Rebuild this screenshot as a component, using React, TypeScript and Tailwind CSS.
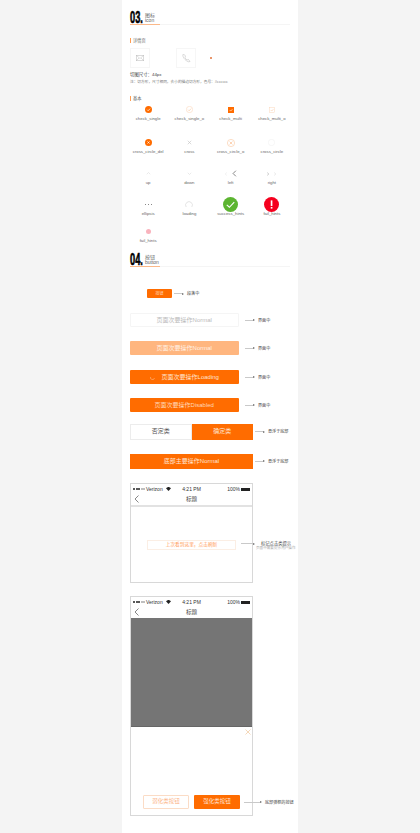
import React from "react";

const O = "#ff6c00";

function Svg({ s, children }: { s: number; children: React.ReactNode }) {
  return (
    <svg width={s} height={s} viewBox="0 0 20 20" fill="none" className="block">
      {children}
    </svg>
  );
}
const Tick = ({ c = "#fff", w = 2 }: { c?: string; w?: number }) => (
  <path d="M6 10.5l3 3 5.5-6" stroke={c} strokeWidth={w} fill="none" />
);
const X = ({ c = "#fff", w = 2 }: { c?: string; w?: number }) => (
  <path d="M7 7l6 6M13 7l-6 6" stroke={c} strokeWidth={w} fill="none" />
);

const cells: { label: string; h: string; icon: React.ReactNode }[] = [
  { label: "check_single", h: "h-[33px]", icon: <Svg s={7}><circle cx="10" cy="10" r="10" fill={O} /><Tick /></Svg> },
  { label: "check_single_o", h: "h-[33px]", icon: <Svg s={7}><circle cx="10" cy="10" r="9" stroke="#fbd2b4" strokeWidth="1.5" /><Tick c="#fbc9a4" /></Svg> },
  { label: "check_multi", h: "h-[33px]", icon: <Svg s={6}><rect width="20" height="20" fill={O} /><Tick /></Svg> },
  { label: "check_multi_o", h: "h-[33px]", icon: <Svg s={6}><rect x="1" y="1" width="18" height="18" stroke="#fbd2b4" strokeWidth="1.5" /><Tick c="#fbc9a4" /></Svg> },
  { label: "cross_circle_del", h: "h-[31px]", icon: <Svg s={7}><circle cx="10" cy="10" r="10" fill={O} /><X /></Svg> },
  { label: "cross", h: "h-[31px]", icon: <Svg s={5}><path d="M3 3l14 14M17 3L3 17" stroke="#c4c4c4" strokeWidth="2.5" /></Svg> },
  { label: "cross_circle_o", h: "h-[31px]", icon: <Svg s={8}><circle cx="10" cy="10" r="9" stroke="#fbc9a4" strokeWidth="1.6" /><path d="M6.5 6.5l7 7M13.5 6.5l-7 7" stroke="#fbb98a" strokeWidth="1.6" /></Svg> },
  { label: "cross_circle", h: "h-[31px]", icon: <Svg s={7}><circle cx="10" cy="10" r="9" stroke="#ececec" strokeWidth="1.4" /></Svg> },
  { label: "up", h: "h-[31px]", icon: <Svg s={5}><path d="M3 13l7-7 7 7" stroke="#d4d4d4" strokeWidth="2" /></Svg> },
  { label: "down", h: "h-[31px]", icon: <Svg s={5}><path d="M3 7l7 7 7-7" stroke="#d4d4d4" strokeWidth="2" /></Svg> },
  {
    label: "left",
    h: "h-[31px]",
    icon: (
      <div className="flex items-center gap-[3px]">
        <Svg s={4}><path d="M14 3l-8 7 8 7" stroke="#dcdcdc" strokeWidth="2" /></Svg>
        <Svg s={7}><path d="M14 2l-8 8 8 8" stroke="#555" strokeWidth="2" /></Svg>
      </div>
    ),
  },
  {
    label: "right",
    h: "h-[31px]",
    icon: (
      <div className="flex items-center gap-[3px]">
        <Svg s={4}><path d="M6 3l8 7-8 7" stroke="#999" strokeWidth="2.5" /></Svg>
        <Svg s={4}><path d="M6 3l8 7-8 7" stroke="#c8c8c8" strokeWidth="2" /></Svg>
      </div>
    ),
  },
  {
    label: "ellipsis",
    h: "h-[27px]",
    icon: (
      <div className="flex gap-[2px]">
        <span className="w-[1px] h-[1px] bg-[#888]" />
        <span className="w-[1px] h-[1px] bg-[#888]" />
        <span className="w-[1px] h-[1px] bg-[#888]" />
      </div>
    ),
  },
  { label: "loading", h: "h-[27px]", icon: <Svg s={8}><path d="M3 15A8.5 8.5 0 1 1 17 15" stroke="#d0d0d0" strokeWidth="1.4" /></Svg> },
  {
    label: "success_hints",
    h: "h-[27px]",
    icon: (
      <Svg s={15}>
        <circle cx="10" cy="10" r="10" fill="#5cb531" />
        <path d="M5 10.5l3.5 3.2L15 6.8" stroke="#fff" strokeWidth="1.5" />
      </Svg>
    ),
  },
  {
    label: "fail_hints",
    h: "h-[27px]",
    icon: (
      <Svg s={15}>
        <circle cx="10" cy="10" r="10" fill="#f5001e" />
        <rect x="9" y="4.5" width="2.2" height="7.5" fill="#fff" />
        <rect x="9" y="13.3" width="2.2" height="2.2" fill="#fff" />
      </Svg>
    ),
  },
  { label: "fail_hints", h: "h-[27px]", icon: <Svg s={5}><circle cx="10" cy="10" r="10" fill="#f9b3bd" /></Svg> },
];

function Title({ num, zh, en }: { num: string; zh: string; en: string }) {
  return (
    <div className="relative flex items-end h-[14px] border-b border-[#f5f5f5]">
      <span className="inline-block w-[15px] shrink-0 origin-left scale-x-[0.56] text-[16.5px] leading-[13px] font-bold text-black [-webkit-text-stroke:0.6px_#000]">
        {num}
      </span>
      <div className="mb-[1px] flex flex-col text-[5px] leading-[5px] text-[#666]">
        <span>{zh}</span>
        <span>{en}</span>
      </div>
      <div className="absolute left-0 bottom-[-1px] w-[30px] h-[1px] bg-[#fbb98a]" />
    </div>
  );
}

function Sub({ children }: { children: React.ReactNode }) {
  return (
    <div className="flex items-center h-[5px] gap-[2px] text-[4.2px] leading-[5px] text-[#666]">
      <span className="w-[1px] h-[5px] bg-[#ff9d52]" />
      {children}
    </div>
  );
}

function Arrow({ w, text, gap = 3 }: { w: number; text: string; gap?: number }) {
  return (
    <div className="flex items-center">
      <div className="flex items-center" style={{ width: w }}>
        <span className="flex-1 h-[1px] bg-[#c9c9c9]" />
        <span className="w-0 h-0 border-y-[1px] border-y-transparent border-l-[2px] border-l-[#666]" />
      </div>
      <span className="text-[4.1px] leading-[5px] whitespace-nowrap text-[#444]" style={{ marginLeft: gap }}>
        {text}
      </span>
    </div>
  );
}

function Btn({ cls, children }: { cls: string; children: React.ReactNode }) {
  return (
    <div className={`w-[108.5px] h-[14px] shrink-0 rounded-[1px] flex items-center justify-center text-[6px] leading-none ${cls}`}>
      {children}
    </div>
  );
}

function StatusBar() {
  return (
    <div className="h-[10.5px] flex items-center justify-between px-[2px] text-[5px] leading-none text-[#333]">
      <div className="flex items-center gap-[1px] w-[42px]">
        <span className="flex gap-[0.5px]">
          <span className="w-[2px] h-[2px] rounded-full bg-[#222]" />
          <span className="w-[2px] h-[2px] rounded-full bg-[#222]" />
          <span className="w-[2px] h-[2px] rounded-full bg-[#222]" />
          <span className="w-[2px] h-[2px] rounded-full bg-[#aaa]" />
          <span className="w-[2px] h-[2px] rounded-full bg-[#aaa]" />
        </span>
        <span>Verizon</span>
        <svg width="5" height="4" viewBox="0 0 10 8" className="ml-[2px]">
          <path d="M0 2.5a7 7 0 0 1 10 0L5 8z" fill="#222" />
        </svg>
      </div>
      <span>4:21 PM</span>
      <div className="flex items-center gap-[1px] w-[42px] justify-end">
        <span>100%</span>
        <span className="w-[9px] h-[3px] bg-[#222]" />
      </div>
    </div>
  );
}

function NavBar() {
  return (
    <div className="relative h-[10.5px] flex items-center justify-center text-[5.6px] leading-none text-[#444]">
      <svg width="5" height="8" viewBox="0 0 5 8" fill="none" className="absolute left-[3px] top-[0.5px]">
        <path d="M4.5 0.5L1 4l3.5 3.5" stroke="#555" strokeWidth="0.7" />
      </svg>
      标题
    </div>
  );
}

export default function App() {
  return (
    <div className="w-[420px] h-[833px] overflow-hidden bg-[#f4f4f4] font-['Liberation_Sans','Noto_Sans_CJK_SC',sans-serif]">
      <div className="ml-[122px] w-[176px] h-[833px] bg-white pl-[8px] pr-[8px] pt-[11px]">
        <Title num="03." zh="图标" en="icon" />

        <div className="mt-[13px]">
          <Sub>详情页</Sub>
        </div>
        <div className="mt-[5px] flex items-center h-[20px]">
          <div className="w-[20px] h-[20px] border border-[#f6f6f6] flex items-center justify-center">
            <svg width="8" height="6" viewBox="0 0 16 12" fill="none">
              <rect x="0.5" y="0.5" width="15" height="11" stroke="#b8b8b8" />
              <path d="M1 1l7 6 7-6M1 11l5-5M15 11l-5-5" stroke="#c0c0c0" />
            </svg>
          </div>
          <div className="ml-[26px] w-[20px] h-[20px] border border-[#f6f6f6] flex items-center justify-center">
            <svg width="9" height="10" viewBox="0 0 18 20" fill="none">
              <path d="M3 2c-3 3 0 8 3 11s7 6 10 4l-3-4-3 1c-2-1-3-3-4-5l1-3z" stroke="#b4b4b4" />
            </svg>
          </div>
          <span className="ml-[14px] w-[1.5px] h-[1.5px] rounded-full bg-[#e2733a]" />
        </div>
        <div className="mt-[4px] text-[4.4px] leading-[6px] text-[#444]">切图尺寸：44px</div>
        <div className="mt-[2px] text-[3.7px] leading-[5px] text-[#777] whitespace-nowrap">
          注：切方形，尺寸相同，去小的描边切方形，色号：#cccccc
        </div>

        <div className="mt-[11px]">
          <Sub>基本</Sub>
        </div>

        <div className="mt-[1px] -ml-[2.5px] w-[165px] grid grid-cols-4">
          {cells.map((c, i) => (
            <div key={i} className={`${c.h} flex flex-col items-center text-[#666]`}>
              <div className="h-[15px] flex items-center justify-center">{c.icon}</div>
              <span className="text-[4.3px] leading-[5px] mt-[-1px] whitespace-nowrap">{c.label}</span>
            </div>
          ))}
        </div>

        <div className="mt-[2px]">
          <Title num="04." zh="按钮" en="button" />
        </div>

        <div className="mt-[22px] flex items-center h-[9px] pl-[17px]">
          <div className="w-[25px] h-[9px] bg-[#ff6c00] rounded-[1px] flex items-center justify-center text-[4px] text-[#ffd9bd]">按钮</div>
          <div className="ml-[2px]">
            <Arrow w={10} text="段落中" />
          </div>
        </div>

        <div className="mt-[15px] flex items-center">
          <Btn cls="border border-[#f5f5f5] bg-white text-[#bbbbbb]">页面次要操作Normal</Btn>
          <div className="ml-[6.5px]"><Arrow w={10} text="界面中" /></div>
        </div>
        <div className="mt-[14px] flex items-center">
          <Btn cls="bg-[#ffb67f] text-[#fff0e4]">页面次要操作Normal</Btn>
          <div className="ml-[6.5px]"><Arrow w={10} text="界面中" /></div>
        </div>
        <div className="mt-[15px] flex items-center">
          <Btn cls="bg-[#ff6c00] text-[#ffe3cf]">
            <svg width="5" height="5" viewBox="0 0 10 10" fill="none" className="mr-[7px]">
              <path d="M1 4a4 4 0 0 0 8 2" stroke="#ffc9a1" strokeWidth="1" />
            </svg>
            页面次要操作Loading
          </Btn>
          <div className="ml-[6.5px]"><Arrow w={10} text="界面中" /></div>
        </div>
        <div className="mt-[14px] flex items-center">
          <Btn cls="bg-[#ff6c00] text-[#ffd6b8]">页面次要操作Disabled</Btn>
          <div className="ml-[6.5px]"><Arrow w={10} text="界面中" /></div>
        </div>

        <div className="mt-[12px] flex items-center h-[15.5px]">
          <div className="w-[61.5px] h-[15.5px] shrink-0 border border-[#ececec] flex items-center justify-center text-[6px] text-[#555]">否定类</div>
          <div className="w-[61.5px] h-[15.5px] shrink-0 bg-[#ff6c00] flex items-center justify-center text-[6px] text-[#ffe3cf]">确定类</div>
          <div className="ml-[2px]"><Arrow w={10} text="悬浮于底部" /></div>
        </div>

        <div className="mt-[14.5px] flex items-center">
          <div className="w-[123px] h-[14.5px] shrink-0 bg-[#ff6c00] flex items-center justify-center text-[6px] text-[#ffe3cf]">底部主要操作Normal</div>
          <div className="ml-[2px]"><Arrow w={10} text="悬浮于底部" /></div>
        </div>

        <div className="mt-[14.5px] flex items-start">
          <div className="w-[123px] h-[100px] shrink-0 border border-[#d8d8d8] flex flex-col">
            <StatusBar />
            <NavBar />
            <div className="h-[1.5px] bg-[#e2e2e2]" />
            <div className="mt-[33.5px] mx-[16px] h-[10px] border border-[#fbeee4] flex items-center justify-center text-[4.7px] text-[#ff9a55] whitespace-nowrap">
              上次看到这里，点击刷新
            </div>
          </div>
          <div className="-ml-[12px] mt-[58px] flex items-start">
            <div className="flex items-center w-[14px] h-[5px]">
              <span className="flex-1 h-[1px] bg-[#c9c9c9]" />
              <span className="w-0 h-0 border-y-[1px] border-y-transparent border-l-[2px] border-l-[#666]" />
            </div>
            <div className="ml-[6px] w-[30px]">
              <div className="text-[4.3px] leading-[5px] text-[#444] whitespace-nowrap">标记点击类提示</div>
              <div className="text-[3.6px] leading-[5px] text-[#aaa] whitespace-nowrap -ml-[5px]">页面中需要提示用户操作</div>
            </div>
          </div>
        </div>

        <div className="mt-[13px] flex items-start">
          <div className="w-[123px] h-[219.5px] shrink-0 border border-[#d8d8d8] flex flex-col">
            <StatusBar />
            <NavBar />
            <div className="h-[109px] bg-[#757575] border-b border-[#666]" />
            <div className="flex justify-end pr-[1.5px] pt-[1.5px]">
              <svg width="6" height="6" viewBox="0 0 6 6" fill="none">
                <path d="M0.5 0.5l5 5M5.5 0.5l-5 5" stroke="#f3cfa9" strokeWidth="0.8" />
              </svg>
            </div>
            <div className="mt-[60px] pl-[12px] flex gap-[5px]">
              <div className="w-[46px] h-[14px] border border-[#fbdcc6] rounded-[1px] flex items-center justify-center text-[5.5px] text-[#fbb58a]">弱化类按钮</div>
              <div className="w-[46px] h-[14px] bg-[#ff6c00] rounded-[1px] flex items-center justify-center text-[5.5px] text-[#ffe3cf]">强化类按钮</div>
            </div>
          </div>
          <div className="-ml-[9px] mt-[203.5px]">
            <Arrow w={18} text="底部弹框的按钮" />
          </div>
        </div>
      </div>
    </div>
  );
}
